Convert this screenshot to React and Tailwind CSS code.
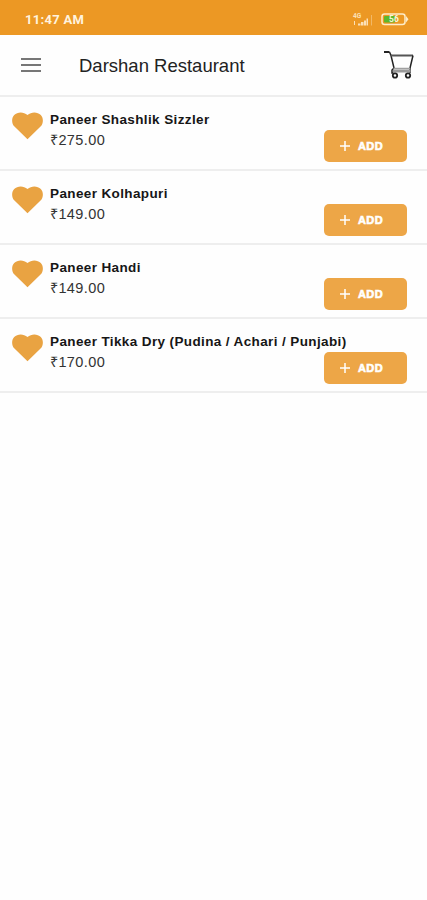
const items = [
  { id: 1, name: 'Paneer Shashlik Sizzler', price: '₹275.00' },
  { id: 2, name: 'Paneer Kolhapuri', price: '₹149.00' },
  { id: 3, name: 'Paneer Handi', price: '₹149.00' },
  { id: 4, name: 'Paneer Tikka Dry (Pudina / Achari / Punjabi)', price: '₹170.00' },
];

const StatusBar = () => (
  <div className="h-[35px] shrink-0 bg-[#ec9824] flex items-center justify-between pl-[25px] pr-[18px] pt-[4px] text-white">
    <span className="font-[Roboto,sans-serif] text-[13px] leading-4 font-bold tracking-[0.3px] text-[#fff3df]">11:47 AM</span>
    <div className="flex items-center gap-[7px]">
      <svg width="22" height="14" viewBox="0 0 22 14" fill="#fbe0b8">
        <text x="1" y="5" fontSize="6.500" fontWeight="700" fontFamily="Roboto, sans-serif">4G</text>
        <path d="M2 8h1v4H2zM6 10.500h2.500v2H6zM9 9h2.500v3.500H9zM12 7.500h2v5h-2zM14.500 5.500h1.500v7h-1.500z" />
        <path d="M19 2h1v10.500h-1z" opacity=".45" />
      </svg>
      <svg width="28" height="13" viewBox="0 0 28 13">
        <rect x="1" y="1" width="23" height="10.500" rx="2.500" fill="none" stroke="#fdecc9" strokeWidth="1.500" />
        <path d="M25 3 27.500 6.200 25 9.500z" fill="#fdecc9" />
        <rect x="3" y="3" width="11" height="6.500" rx="1" fill="#5cb82c" />
        <text x="8" y="9.300" fontSize="8.500" fontWeight="700" fontFamily="Roboto, sans-serif" fill="#f4f5dc">56</text>
      </svg>
    </div>
  </div>
);

const CartIcon = () => (
  <svg width="32" height="30" viewBox="0 0 32 30" fill="none" stroke="#222" strokeWidth="1.500">
    <path d="M1 2h5.500" strokeWidth="2" />
    <path d="M6.500 2 8 5.500l3 12.500-2 2v3h1.500" />
    <path d="M8 5.500h22" stroke="#555" strokeWidth="2" />
    <path d="M30 5.500 27 18v5" />
    <path d="M10.500 18.500H27" stroke="#a0a0a0" strokeWidth="1.500" />
    <path d="M10 21h17.500" stroke="#9a9a9a" strokeWidth="3" />
    <circle cx="12" cy="25.500" r="2.200" strokeWidth="1.800" />
    <circle cx="25" cy="25.500" r="2.200" strokeWidth="1.800" />
  </svg>
);

const Header = () => (
  <header className="h-[62px] shrink-0 flex items-center border-b-2 border-[#eeeeee] pl-[21px] pr-3">
    <svg width="20" height="16" viewBox="0 0 20 16" stroke="#777" strokeWidth="2">
      <path d="M0 2h20M0 8h20M0 14h20" />
    </svg>
    <h1 className="ml-[38px] flex-1 pt-px text-[18.500px] text-[#222]">Darshan Restaurant</h1>
    <CartIcon />
  </header>
);

const MenuItem = ({ item }) => (
  <li className="h-[74.100px] flex border-b-2 border-[#eeeeee] pl-3 pr-[21px]">
    <svg className="mt-[15px] shrink-0" width="31" height="28" viewBox="0 0 31 28" fill="#e9a342">
      <path d="M15.500 27.300 2.200 14.300C-.5 11.400-.6 6 2.200 3 5.500-.3 11.500-.5 15.500 3c4-3.500 10-3.300 13.300 0 2.800 3 2.700 8.400 0 11.300z" />
    </svg>
    <div className="ml-[7px] w-[274px] shrink-0 whitespace-nowrap pt-[13px]">
      <p className="text-[13.500px] leading-5 font-bold tracking-[0.38px] text-[#161616]">{item.name}</p>
      <p className="text-[14.500px] leading-5 tracking-[0.4px] text-[#333]">{item.price}</p>
    </div>
    <button className="mt-[33px] h-8 w-[82.500px] shrink-0 rounded-[5px] bg-[#eda647] flex items-center pl-4 text-white">
      <svg width="10" height="10" viewBox="0 0 10 10" stroke="currentColor" strokeWidth="1.500">
        <path d="M5 0v10M0 5h10" />
      </svg>
      <span className="ml-2 text-[11px] font-bold tracking-[0.4px] [-webkit-text-stroke:0.600px_white]">ADD</span>
    </button>
  </li>
);

export default function App() {
  return (
    <div className="w-[427px] h-[900px] overflow-hidden bg-[#fefefe] flex flex-col font-['Liberation_Sans',Arial,sans-serif]">
      <StatusBar />
      <Header />
      <ul>
        {items.map((item) => (
          <MenuItem key={item.id} item={item} />
        ))}
      </ul>
    </div>
  );
}
